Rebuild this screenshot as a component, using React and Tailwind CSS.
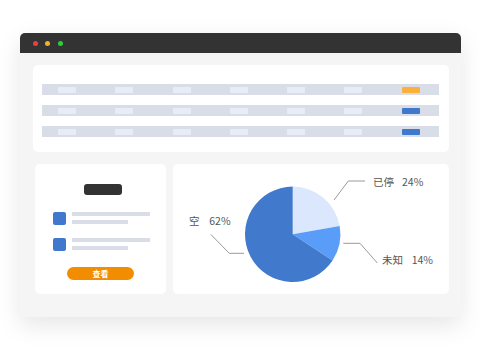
import React from "react";

const pillOffsets = [0, 1, 2, 3, 4, 5];

function Row({ accent }) {
  return (
    <div className="flex h-[11px] items-center gap-[39.3px] bg-[#d9dde8] pl-[16px]">
      {pillOffsets.map((i) => (
        <div key={i} className="h-[6px] w-[18px] rounded-[1px] bg-[#e8ecf7]" />
      ))}
      <div className={`h-[6px] w-[18px] rounded-[1px] ${accent}`} />
    </div>
  );
}

function Item() {
  return (
    <div className="flex items-start gap-[6px]">
      <div className="h-[13px] w-[13px] rounded-[2px] bg-[#3f78cc]" />
      <div className="flex flex-col gap-[4px]">
        <div className="h-[4px] w-[78px] bg-[#d9dde8]" />
        <div className="h-[4px] w-[56px] bg-[#d9dde8]" />
      </div>
    </div>
  );
}

function Pie() {
  const cx = 119.7;
  const cy = 70.3;
  const r = 47.7;
  const pt = (deg) => {
    const a = (deg * Math.PI) / 180;
    return [cx + r * Math.sin(a), cy - r * Math.cos(a)];
  };
  const arc = (a0, a1) => {
    const [x0, y0] = pt(a0);
    const [x1, y1] = pt(a1);
    const large = a1 - a0 > 180 ? 1 : 0;
    return `M${cx},${cy} L${x0},${y0} A${r},${r} 0 ${large} 1 ${x1},${y1} Z`;
  };
  const font = { fontFamily: '"Noto Sans CJK SC", "Liberation Sans", sans-serif', fontSize: 10.5 };
  return (
    <svg width="276" height="130" viewBox="0 0 276 130">
      <path d={arc(0, 80)} fill="#dbe7fd" />
      <path d={arc(80, 123.4)} fill="#5a9df8" />
      <path d={arc(123.4, 360)} fill="#417acc" />
      <polyline points="161,36 175.3,17 192,17" fill="none" stroke="#9a9a9a" strokeWidth="1" />
      <polyline points="170.3,79.3 187,79.3 204.3,99" fill="none" stroke="#9a9a9a" strokeWidth="1" />
      <polyline points="37.7,70.3 56.3,89.3 71,89.3" fill="none" stroke="#9a9a9a" strokeWidth="1" />
      <g fill="#555555" style={font}>
        <text x="200" y="22">已停</text>
        <text x="229" y="22">24%</text>
        <text x="209" y="100">未知</text>
        <text x="238.7" y="100">14%</text>
        <text x="16" y="61">空</text>
        <text x="36.3" y="61">62%</text>
      </g>
    </svg>
  );
}

export default function App() {
  return (
    <div className="h-[350px] w-[481px] bg-white pl-[20px] pt-[33px]" style={{ fontFamily: '"Noto Sans CJK SC", "Liberation Sans", sans-serif' }}>
      <div className="flex h-[284px] w-[441px] flex-col overflow-hidden rounded-t-[5px] bg-[#f5f5f5] shadow-[0_8px_24px_rgba(0,0,0,0.10)]">
        <div className="flex h-[20px] items-center gap-[7.5px] bg-[#333333] pl-[12.5px]">
          <div className="h-[5px] w-[5px] rounded-full bg-[#f23c3c]" />
          <div className="h-[5px] w-[5px] rounded-full bg-[#f5b024]" />
          <div className="h-[5px] w-[5px] rounded-full bg-[#2ccd3f]" />
        </div>
        <div className="ml-[13px] mt-[12px] flex h-[87px] w-[416px] flex-col gap-[10px] rounded-[5px] bg-white pl-[9px] pr-[10px] pt-[19px]">
          <Row accent="bg-[#fbb03b]" />
          <Row accent="bg-[#3f78cc]" />
          <Row accent="bg-[#3f78cc]" />
        </div>
        <div className="ml-[15px] mt-[12px] flex gap-[7px]">
          <div className="flex h-[130px] w-[131px] flex-col items-center rounded-[5px] bg-white pt-[20px]">
            <div className="ml-[5px] h-[11px] w-[38px] rounded-[3px] bg-[#333333]" />
            <div className="mt-[17px] flex w-full flex-col gap-[13px] pl-[18px]">
              <Item />
              <Item />
            </div>
            <div className="mt-[16px] flex h-[13px] w-[67px] items-center justify-center rounded-full bg-[#f28c00] text-[8px] font-bold leading-none text-white">
              查看
            </div>
          </div>
          <div className="h-[130px] w-[276px] rounded-[5px] bg-white">
            <Pie />
          </div>
        </div>
      </div>
    </div>
  );
}
